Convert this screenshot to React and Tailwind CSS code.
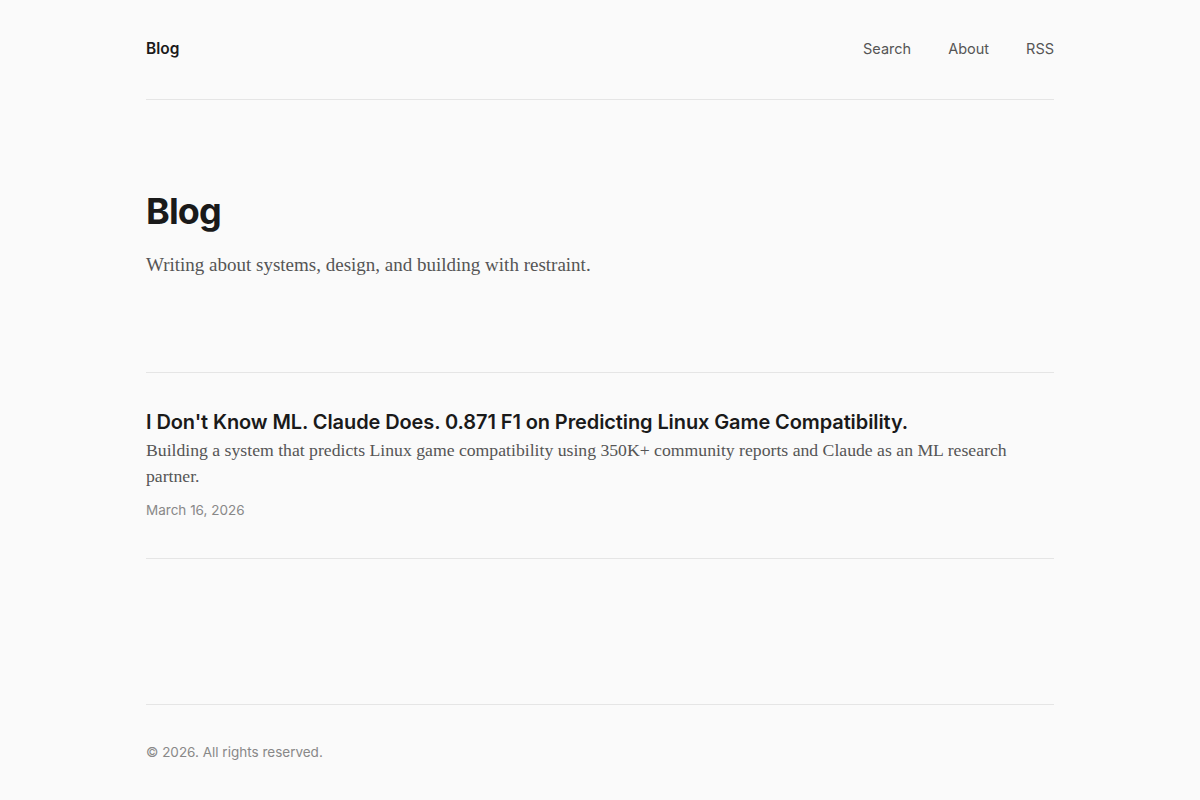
import React from 'react';

export default function App() {
  const serif = 'font-["Liberation_Serif",serif]';
  return (
    <div className="min-h-screen bg-[#fafafa] text-[#1a1a1a] font-[Inter,'Liberation_Sans',sans-serif]">
      <div className="w-[908px] mx-auto">
        {/* Header */}
        <header className="h-[100px] flex items-center justify-between border-b border-[#e5e5e5]">
          <a href="#" className="mb-[2px] text-[15.5px] font-semibold text-[#1a1a1a]">Blog</a>
          <nav className="mb-[2px] flex items-center gap-[37px] text-[14.5px] text-[#555]">
            <a href="#">Search</a>
            <a href="#">About</a>
            <a href="#">RSS</a>
          </nav>
        </header>

        {/* Hero */}
        <section className="pt-[90px] pb-[93px]">
          <h1 className="text-[36px] leading-[43px] font-bold tracking-tight">Blog</h1>
          <p className={`mt-[18px] text-[19px] leading-[28px] text-[#555] ${serif}`}>
            Writing about systems, design, and building with restraint.
          </p>
        </section>

        {/* Posts */}
        <section className="border-t border-[#e5e5e5]">
          <article className="pt-[35px] pb-[38px] border-b border-[#e5e5e5]">
            <a href="#" className="block text-[20px] leading-[28px] font-semibold tracking-[-0.1px] text-[#1a1a1a]">
              I Don't Know ML. Claude Does. 0.871 F1 on Predicting Linux Game Compatibility.
            </a>
            <p className={`mt-[1px] text-[17.7px] leading-[26px] text-[#555] ${serif}`}>
              Building a system that predicts Linux game compatibility using 350K+ community reports and Claude as an ML research partner.
            </p>
            <div className="mt-[11px] text-[13.5px] leading-5 text-[#888]">March 16, 2026</div>
          </article>
        </section>

        {/* Footer */}
        <footer className="mt-[145px] border-t border-[#e5e5e5] pt-[37px] pb-10">
          <p className="text-[13.5px] leading-5 text-[#888]">© 2026. All rights reserved.</p>
        </footer>
      </div>
    </div>
  );
}
